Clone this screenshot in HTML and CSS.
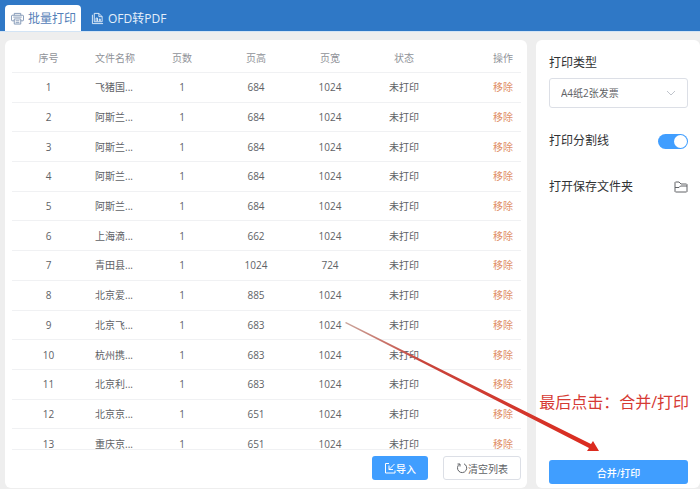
FILE: index.html
```html
<!DOCTYPE html>
<html lang="zh-CN">
<head>
  <meta charset="UTF-8" />
  <meta name="viewport" content="width=device-width, initial-scale=1.0"/>
  <title>批量打印</title>
  <link rel="stylesheet" href="styles.css">
</head>
<body>
  <!-- Top tabs -->
  <nav class="topbar">
    <a class="tab active" href="#print">
      <svg class="tab-icon" viewBox="0 0 14 14" fill="none" stroke="currentColor">
        <path d="M3.500 3.500v-2h7v2M3.500 9.500H1L.5 9V4l.5-.5h12l.5.5v5l-.5.5h-2.500M3.500 7.500h7v5.500h-7zM5 9.500h4M5 11.500h4M2.500 5.500h9"/>
      </svg>
      批量打印
    </a>
    <a class="tab" href="#convert">
      <svg class="tab-icon" viewBox="0 0 14 14" fill="none" stroke="currentColor">
        <path d="M3.500 10.500V1.500h5l3.500 3.500v5.500zM8.500 1.500v3.500h3.500M1.500 3v9.500h11.500M5.500 10V6.500h1.500V10M9 10V7.500h1V10"/>
      </svg>
      OFD转PDF
    </a>
  </nav>

  <main class="content">
    <!-- File list -->
    <section class="panel list-panel">
      <div class="table-wrap">
        <table class="file-table">
          <colgroup>
            <col class="col-index">
            <col class="col-name">
            <col class="col-num">
            <col class="col-num">
            <col class="col-num">
            <col class="col-num">
            <col class="col-action">
          </colgroup>
          <thead>
            <tr><th>序号</th><th class="name">文件名称</th><th>页数</th><th>页高</th><th>页宽</th><th>状态</th><th class="action">操作</th></tr>
          </thead>
          <tbody>
            <tr><td>1</td><td class="name">飞猪国...</td><td>1</td><td>684</td><td>1024</td><td>未打印</td><td class="action"><button class="remove">移除</button></td></tr>
            <tr><td>2</td><td class="name">阿斯兰...</td><td>1</td><td>684</td><td>1024</td><td>未打印</td><td class="action"><button class="remove">移除</button></td></tr>
            <tr><td>3</td><td class="name">阿斯兰...</td><td>1</td><td>684</td><td>1024</td><td>未打印</td><td class="action"><button class="remove">移除</button></td></tr>
            <tr><td>4</td><td class="name">阿斯兰...</td><td>1</td><td>684</td><td>1024</td><td>未打印</td><td class="action"><button class="remove">移除</button></td></tr>
            <tr><td>5</td><td class="name">阿斯兰...</td><td>1</td><td>684</td><td>1024</td><td>未打印</td><td class="action"><button class="remove">移除</button></td></tr>
            <tr><td>6</td><td class="name">上海滴...</td><td>1</td><td>662</td><td>1024</td><td>未打印</td><td class="action"><button class="remove">移除</button></td></tr>
            <tr><td>7</td><td class="name">青田县...</td><td>1</td><td>1024</td><td>724</td><td>未打印</td><td class="action"><button class="remove">移除</button></td></tr>
            <tr><td>8</td><td class="name">北京爱...</td><td>1</td><td>885</td><td>1024</td><td>未打印</td><td class="action"><button class="remove">移除</button></td></tr>
            <tr><td>9</td><td class="name">北京飞...</td><td>1</td><td>683</td><td>1024</td><td>未打印</td><td class="action"><button class="remove">移除</button></td></tr>
            <tr><td>10</td><td class="name">杭州携...</td><td>1</td><td>683</td><td>1024</td><td>未打印</td><td class="action"><button class="remove">移除</button></td></tr>
            <tr><td>11</td><td class="name">北京利...</td><td>1</td><td>683</td><td>1024</td><td>未打印</td><td class="action"><button class="remove">移除</button></td></tr>
            <tr><td>12</td><td class="name">北京京...</td><td>1</td><td>651</td><td>1024</td><td>未打印</td><td class="action"><button class="remove">移除</button></td></tr>
            <tr><td>13</td><td class="name">重庆京...</td><td>1</td><td>651</td><td>1024</td><td>未打印</td><td class="action"><button class="remove">移除</button></td></tr>
          </tbody>
        </table>
      </div>
      <div class="list-footer">
        <button class="btn btn-primary btn-import">
          <svg class="btn-icon" viewBox="0 0 12 12" fill="none" stroke="currentColor">
            <path d="M5 1.500H1.500v9.500h9.500V8.500M10.500 2L5 7.500M5 3.500v4h4"/>
          </svg>导入
        </button>
        <button class="btn btn-clear">
          <svg class="btn-icon" viewBox="0 0 12 12" fill="none" stroke="currentColor">
            <path d="M8 1.800A4.600 4.600 0 1 1 3.500 2.200M1.500 2h2.500v2.500"/>
          </svg>清空列表
        </button>
      </div>
    </section>

    <!-- Print settings -->
    <aside class="panel side-panel">
      <label class="side-label" for="print-type">打印类型</label>
      <div class="select-box">
        <select id="print-type">
          <option>A4纸2张发票</option>
        </select>
        <svg class="select-arrow" viewBox="0 0 10 10" fill="none" stroke="currentColor">
          <path d="M1 3l4 4 4-4"/>
        </svg>
      </div>
      <div class="side-row">
        <label class="side-label" for="split-line">打印分割线</label>
        <input class="switch" type="checkbox" id="split-line" checked>
      </div>
      <div class="side-row">
        <span class="side-label" id="folder-label">打开保存文件夹</span>
        <button class="folder" aria-labelledby="folder-label">
          <svg viewBox="0 0 14 14" fill="none" stroke="currentColor">
            <path d="M1.500 12L1 11.500V2.500L1.500 2H5l2 2h5.500l.5.500v7l-.5.500zM1 7.500h4l1.500-1.500H13"/>
          </svg>
        </button>
      </div>
      <button class="btn btn-primary btn-merge">合并/打印</button>
    </aside>
  </main>

  <!-- Hint over the page -->
  <div class="hint">
    <p class="hint-text">最后点击：合并/打印</p>
    <svg class="hint-arrow" viewBox="0 0 254 130">
      <defs>
        <linearGradient id="fade" x1="0" y1="0" x2="1" y2="0">
          <stop offset="0" stop-color="#c9a59b"/>
          <stop offset="0.300" stop-color="#c8453c"/>
          <stop offset="1" stop-color="#dc2a1e"/>
        </linearGradient>
      </defs>
      <path fill="url(#fade)" d="M0 1L1 0L246 122L248 119L254 129L242 129L244 126Z"/>
    </svg>
  </div>
</body>
</html>
```

FILE: styles.css
```css
:root {
  --bar-color: #2f78c6;
  --primary: #409eff;
  --bg-color: #eeeeee;
  --line-color: #f0f1f3;
  --text-color: #606266;
  --remove-color: #e08e66;
  --hint-color: #d63a34;
}

* {
  box-sizing: border-box;
}

body {
  margin: 0;
  height: 100vh;
  display: flex;
  flex-direction: column;
  position: relative;
  overflow: hidden;
  font-family: "Open Sans", "Noto Sans CJK SC", sans-serif;
  font-size: 10px;
  color: var(--text-color);
  background-color: var(--bg-color);
}

button, select {
  font-family: inherit;
  font-size: inherit;
  color: inherit;
}

button {
  padding: 0;
  border: none;
  background: none;
  cursor: pointer;
}

.topbar {
  display: flex;
  align-items: flex-end;
  gap: 4px;
  height: 32px;
  padding-left: 5px;
  border-bottom: 1px solid #d3e4f5;
  background-color: var(--bar-color);
}

.tab {
  display: flex;
  align-items: center;
  gap: 4px;
  height: 26px;
  padding: 0 6px;
  border-radius: 4px 4px 0 0;
  font-size: 12px;
  color: #e4effa;
  text-decoration: none;
}

.tab.active {
  padding-right: 5px;
  background-color: #fff;
  color: #5580b8;
}

.tab-icon {
  width: 13px;
  height: 13px;
}

.tab.active .tab-icon {
  color: #8095b4;
}

.content {
  flex: 1;
  min-height: 0;
  display: flex;
  gap: 9px;
  padding: 8px 0 1px 5px;
}

.panel {
  display: flex;
  flex-direction: column;
  background-color: #fff;
  border-radius: 6px;
}

.list-panel {
  flex: 1;
  min-width: 0;
  padding: 0 6px 0 7px;
}

.table-wrap {
  flex: 1;
  min-height: 0;
  overflow: hidden;
  border-bottom: 1px solid var(--line-color);
}

.file-table {
  width: 100%;
  height: 419px;
  table-layout: fixed;
  border-collapse: separate;
  border-spacing: 0;
  text-align: center;
}

.col-index {
  width: 73px;
}

.col-name {
  width: 60px;
}

.col-num {
  width: 74px;
}

.file-table th, .file-table td {
  padding: 0;
  line-height: 16px;
  border-bottom: 1px solid var(--line-color);
}

.file-table th {
  height: 33px;
  padding-top: 4px;
  font-weight: 400;
  color: #909399;
}

.file-table .name {
  padding-left: 10px;
  text-align: left;
  white-space: nowrap;
}

.file-table .action {
  padding-right: 8px;
  text-align: right;
}

.remove {
  color: var(--remove-color);
}

.list-footer {
  display: flex;
  justify-content: flex-end;
  gap: 15px;
  padding: 6px 0 8px;
}

.btn {
  display: flex;
  align-items: center;
  justify-content: center;
  height: 24px;
  padding: 0 12px;
  border-radius: 3px;
}

.btn-primary {
  background-color: var(--primary);
  color: #fff;
  font-weight: 500;
}

.btn-clear {
  border: 1px solid #dcdfe6;
}

.btn-icon {
  width: 12px;
  height: 12px;
}

.side-panel {
  width: 164px;
  padding: 14px 12px 4px 13px;
}

.side-label {
  font-size: 12px;
  line-height: 18px;
  color: #303133;
}

.select-box {
  position: relative;
  margin: 6px 0 24px;
}

.select-box select {
  display: block;
  appearance: none;
  width: 100%;
  height: 30px;
  padding: 0 24px 0 11px;
  border: 1px solid #dcdfe6;
  border-radius: 3px;
  background-color: #fff;
}

.select-arrow {
  position: absolute;
  top: 10px;
  right: 12px;
  width: 10px;
  height: 10px;
  color: #c0c4cc;
  pointer-events: none;
}

.side-row {
  display: flex;
  align-items: center;
  justify-content: space-between;
  margin-bottom: 28px;
}

.switch {
  appearance: none;
  width: 30px;
  height: 15px;
  margin: 0;
  padding: 1px;
  display: flex;
  border-radius: 8px;
  background-color: #c0c4cc;
}

.switch::before {
  content: "";
  width: 13px;
  height: 13px;
  border-radius: 50%;
  background-color: #fff;
}

.switch:checked {
  justify-content: flex-end;
  background-color: var(--primary);
}

.folder svg {
  display: block;
  width: 14px;
  height: 14px;
}

.btn-merge {
  width: 100%;
  margin-top: auto;
}

/* hint text and arrow lie over the panels, tied to the merge button */
.hint {
  position: absolute;
  right: 11px;
  bottom: 37px;
  pointer-events: none;
}

.hint-text {
  margin: 0 0 37px;
  font-size: 16px;
  line-height: 26px;
  color: var(--hint-color);
}

.hint-arrow {
  position: absolute;
  right: 90px;
  bottom: 0;
  width: 254px;
  height: 130px;
}
```
